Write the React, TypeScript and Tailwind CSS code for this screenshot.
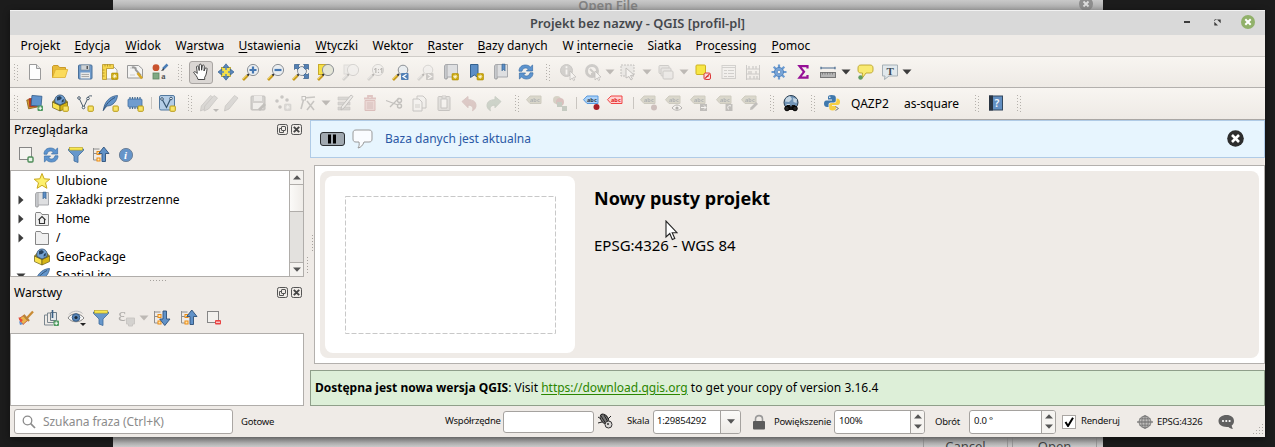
import React from "react";

type P = { children?: React.ReactNode; dim?: boolean };
const Ic = ({ children, dim }: P) => (
  <svg viewBox="0 0 18 18" className={dim ? "h-[18px] w-[18px] shrink-0 overflow-visible opacity-30 grayscale" : "h-[18px] w-[18px] shrink-0 overflow-visible"} fill="none">
    {children}
  </svg>
);

const Handle = ({ w }: { w: string }) => (
  <div className={`${w} flex shrink-0 justify-center`}>
    <svg viewBox="0 0 5 17" className="h-[17px] w-[5px]">
      {[0, 3, 6, 9, 12, 15].map((y) => (
        <g key={y} fill="#b5b1ac">
          <rect x="0" y={y} width="1" height="1" />
          <rect x="3" y={y + 1} width="1" height="1" />
        </g>
      ))}
    </svg>
  </div>
);
const Slot = ({ w = "w-[25px]", children }: { w?: string; children?: React.ReactNode }) => (
  <div className={`${w} flex shrink-0 items-center justify-center`}>{children}</div>
);
const Sep = ({ w = "w-[6px]" }: { w?: string }) => (
  <div className={`${w} flex shrink-0 justify-center`}>
    <div className="h-3 w-px bg-[#c9c5c0]" />
  </div>
);
const Arrow = ({ w, dim }: { w: string; dim?: boolean }) => (
  <div className={`${w} flex shrink-0 justify-center`}>
    <svg viewBox="0 0 10 6" className="h-[6px] w-[10px] shrink-0">
      <path d="M0.5 0.5h9L5 5.5z" fill={dim ? "#bdb9b5" : "#3c3c3c"} />
    </svg>
  </div>
);

const Star = ({ x = 12, y = 12 }: { x?: number; y?: number }) => (
  <g transform={`translate(${x} ${y})`}>
    <rect width="6.5" height="6.5" rx="0.8" fill="#c9a50a" stroke="#b08f00" strokeWidth=".6" />
    <path d="M3.2 1v4.4M1 3.2h4.4M1.7 1.7l3 3M4.7 1.7l-3 3" stroke="#fffbe0" strokeWidth=".8" />
  </g>
);
const Yellow = () => <rect x="12" y="12" width="5.3" height="5.3" rx="0.8" fill="#f8e468" stroke="#b89a14" strokeWidth="1" />;
const Lens = ({ cx = 11, cy = 7, r = 5.6, fill = "#e9edf0" }: { cx?: number; cy?: number; r?: number; fill?: string }) => (
  <g>
    <path d="M7 11 5 13" stroke="#333" strokeWidth="2" />
    <path d="M5.5 12.5 1 17" stroke="#c79a1e" strokeWidth="2.6" />
    <path d="M5 12.2 1 16" stroke="#f5d65b" strokeWidth="1" />
    <circle cx={cx} cy={cy} r={r} fill={fill} stroke="#8d9196" strokeWidth="1" />
  </g>
);
const Refresh = () => (
  <g>
    <path d="M2 8.2C2 4 5 2 8.5 2c2.3 0 3.8.9 4.9 2L15.6 2v6H9.4l2-2C10.600 5.200 9.700 5 8.500 5 6.500 5 5.500 6.200 5 8.200z" fill="#5d94cf" stroke="#3b6ea6" strokeWidth=".7" />
    <path d="M16 9.800C16 14 13 16 9.500 16c-2.300 0-3.800-.9-4.900-2L2.400 16v-6h6.200l-2 2c.8.8 1.700 1 2.900 1 2 0 3-1.200 3.500-3.200z" fill="#5d94cf" stroke="#3b6ea6" strokeWidth=".7" />
  </g>
);
const Bookmark = ({ mark = true }: { mark?: boolean }) => (
  <g>
    <path d="M2.500 4c0-1.500.8-2.500 2-2.500H15.500v12.500H5v2H3.500c-.6 0-1-.5-1-1z" fill="#dedfe1" stroke="#a0a3a7" strokeWidth=".9" />
    <path d="M5.200 1.500v14H3.500c-.6 0-1-.5-1-1V4c0-1.500.8-2.500 2-2.500z" fill="#c6c8cc" stroke="#999" strokeWidth=".5" />
    {mark && <path d="M10 1.200h3v6.600l-1.500-1.500L10 7.800z" fill="#5c8ec6" stroke="#33618f" strokeWidth=".7" />}
  </g>
);
const Cube = () => (
  <g>
    <path d="M1.500 8 9 11.500V17L1.500 13.600z" fill="#fae24c" stroke="#695b12" strokeWidth=".7" />
    <path d="M16.500 8 9 11.500V17l7.500-3.400z" fill="#d6b516" stroke="#695b12" strokeWidth=".7" />
    <path d="M1.500 8 4 5l5 2 5-2 2.500 3L9 11.500z" fill="#9c8520" stroke="#695b12" strokeWidth=".5" />
    <path d="M4 8.500C3 3.500 6 1 9 1s6 2.500 5 7.500l-5 2.500z" fill="#74a2d3" stroke="#34516f" strokeWidth=".8" />
    <path d="M6 3l3-1 2 2-2 2-3 .5zM11 6l2-1-.5 3-2 .5z" fill="#27425f" />
  </g>
);
const Feather = () => (
  <g>
    <path d="M2.500 16C3 9 8 2 16.500 1.500 16 7 12 12 6 12z" fill="#6395cb" stroke="#3a5f8a" strokeWidth=".8" />
    <path d="M2 17C5 10 9 6 14 3.500" stroke="#2e4c6e" strokeWidth=".9" />
  </g>
);
const Nodes = () => (
  <g>
    <path d="M3 4 7.500 13.500 12 4" stroke="#4a5c6c" strokeWidth="1" />
    <path d="M12 4c0-2 2-2.500 4-2" stroke="#4a5c6c" />
    <circle cx="3" cy="4" r="1.300" fill="#fff" stroke="#4a5c6c" />
    <circle cx="7.500" cy="13.500" r="1.300" fill="#fff" stroke="#4a5c6c" />
    <circle cx="12" cy="4.500" r="1.300" fill="#fff" stroke="#4a5c6c" />
  </g>
);
const Pencil = () => <path d="M12.500 1.500 16 4 7 15l-4.500 2 .8-5z" fill="#a7a29b" stroke="#6d6860" strokeWidth=".8" />;
const Tag = ({ fill, stroke, x = 0, y = 0 }: { fill: string; stroke: string; x?: number; y?: number }) => (
  <g transform={`translate(${x} ${y})`}>
    <path d="M1.500 6.700 5 3h11v7.500H5z" fill={fill} stroke={stroke} strokeWidth="1" strokeLinejoin="round" />
    <text x="5" y="8.900" fontSize="5.600" fontWeight="700" fontFamily="Noto Sans" fill={stroke === "#f04545" ? "#e02020" : "#2f3c49"}>abc</text>
  </g>
);
const Funnel = () => (
  <g>
    <path d="M1.500 3h15v1.500L11 10v6.500l-4-1.500v-5L1.500 4.500z" fill="#6797cb" stroke="#3e6b9c" strokeWidth=".8" />
    <rect x="2.500" y="1.500" width="13" height="2.600" fill="#f7e850" stroke="#b49c1a" strokeWidth=".6" />
  </g>
);
const TreeArrow = ({ down }: { down?: boolean }) => (
  <g>
    <path d="M1.500 2v12h4M1.500 3h6M1.500 7.500h4" stroke="#8e8e8e" />
    <rect x="5" y="5.500" width="3" height="3" fill="#ffe6ad" stroke="#ee8c12" />
    <rect x="5" y="12" width="3" height="3" fill="#ffe6ad" stroke="#ee8c12" />
    <path d={down ? "M10 2h3.500v8H17l-5.200 6.500L6.700 10H10z" : "M10 15.500h3.500v-8H17L11.800 1 6.700 7.500H10z"} fill="#6192c8" stroke="#2c4f78" strokeWidth=".9" />
  </g>
);
const Plus = () => (
  <g>
    <rect x="11.500" y="11.500" width="5.500" height="5.500" rx="1" fill="#4e9a5f" />
    <path d="M14.200 12.500v3.600M12.500 14.200h3.600" stroke="#fff" />
  </g>
);
const Sel = () => (
  <g>
    <rect x="2" y="2" width="13" height="11" fill="#ddd9b2" stroke="#555" strokeDasharray="2 1" />
    <path d="M7 5l8 7-3.500.5 2 3.500-1.500 1-2-3.500L7 15z" fill="#fff" stroke="#555" />
  </g>
);
const Cursor = () => <path d="M11 8l6 6-2.500.4 1.300 2.600-1.300.6-1.300-2.600L11 17z" fill="#fff" stroke="#555" strokeWidth=".8" />;

const Toolbar1 = () => (
  <div className="flex h-[31px] shrink-0 items-center border-b border-[#b3b0ad] bg-gradient-to-b from-[#f8f5f1] to-[#eeeae5]">
    <Handle w="w-[12px]" />
    <Slot><Ic><path d="M3.500 1.500h7l4 4v11h-11z" fill="#fdfdfd" stroke="#9a9a9a" /><path d="M10.500 1.500v4h4" fill="#e3e3e3" stroke="#9a9a9a" /></Ic></Slot>
    <Slot><Ic><path d="M1.500 14.500v-11l1-1H7l1.500 2h6v3" fill="#e8bb38" stroke="#c9992a" /><path d="M1.500 14.500 4.500 6.500h12.200l-2.500 8z" fill="#fbdb5c" stroke="#dcae30" strokeWidth=".8" /></Ic></Slot>
    <Slot><Ic><rect x="2.500" y="2" width="13.500" height="14" rx="1" fill="#6f9bcb" stroke="#4a7099" /><rect x="5" y="2" width="8.500" height="5" fill="#cfd3d6" stroke="#7b8a98" strokeWidth=".6" /><rect x="10.500" y="3" width="1.500" height="3" fill="#555" /><rect x="4.500" y="9.500" width="9.500" height="6" fill="#e9e9e7" /><path d="M5.500 11.500h7.500M5.500 13.500h7.500" stroke="#999" strokeWidth=".8" /></Ic></Slot>
    <Slot><Ic><path d="M5 4h8l3 3v9H5z" fill="#f8f8f6" stroke="#999" strokeWidth=".8" /><path d="M1.500 1.500h11v4h-7v11h-4z" fill="#f6d64d" stroke="#b8962a" strokeWidth=".8" /><path d="M4 3.500v-2M6.500 3.500v-2M9 3.500v-2M3.500 7h-2M3.500 10h-2M3.500 13h-2" stroke="#8d7010" strokeWidth=".6" /><Star x={10.500} y={10} /></Ic></Slot>
    <Slot><Ic><path d="M1.500 2.500h11l4 3.500v9h-15z" fill="#f4f4f3" stroke="#999" /><path d="M4 5h7M4 12h5" stroke="#ccc" /><path d="M6 4.500c2-.8 4 .5 3.800 2.500l5.200 5.600" stroke="#999" strokeWidth="2" /><path d="m11.500 10 4.500 5.500" stroke="#d5a625" strokeWidth="2.600" /></Ic></Slot>
    <Slot><Ic><circle cx="5" cy="4.700" r="3.400" fill="#c9522d" /><path d="M16.500 1.500 12 6" stroke="#4c7eb6" strokeWidth="2.500" /><path d="M12.500 5 10 8l3-.8z" fill="#32363b" /><rect x="2" y="10" width="6" height="6" fill="#7fa983" stroke="#5d8561" strokeWidth=".8" /><text x="10.200" y="15.800" fontSize="8.500" fontWeight="700" fontFamily="Liberation Serif" fill="#555">a</text></Ic></Slot>
    <Handle w="w-[17px]" />
    <div className="flex h-[23px] w-6 shrink-0 items-center justify-center rounded-[3px] border border-[#a9a5a2] bg-[#dad6d3]">
      <Ic><path d="M6 16.500C5.500 13.500 2.500 11 1.600 9.300c.8-1 2.200-.5 3.700 1.200L4.500 3.600c.9-.9 1.900-.5 2.100.6l.6 3.300V1.800c.8-1 2-.8 2.200.2l.2 5.200.8-4.800c.9-.7 1.900-.3 1.900.8L12 8l1.300-3c1-.5 1.900.1 1.700 1.200-.5 4-1 6.500-2.300 8v2.300z" fill="#fff" stroke="#333" strokeWidth=".9" /></Ic>
    </div>
    <Slot><Ic><rect x="4.500" y="4.500" width="9" height="9" fill="#f3df48" stroke="#b59d20" strokeWidth=".8" /><path d="M9 .8 12 4.500H6zM9 17.200 12 13.500H6zM1 9 4.700 6v6zM17 9l-3.700-3v6z" fill="#5887bd" stroke="#38618f" strokeWidth=".7" /><path d="M9 4v3M9 11v3M4 9h3M11 9h3" stroke="#5887bd" strokeWidth="1.500" /></Ic></Slot>
    <Slot><Ic><Lens /><path d="M11 3.500v7M7.500 7h7" stroke="#4678b2" strokeWidth="2.200" /></Ic></Slot>
    <Slot><Ic><Lens /><path d="M7.500 7h7" stroke="#4678b2" strokeWidth="2.200" /></Ic></Slot>
    <Slot><Ic><Lens r={4.500} cx={10} cy={8} /><path d="M2.500 1.500h5L6 3l1.500 1.500-2 2L4 5 2.500 6.500zM16.500 1.500h-5L13 3l-1.500 1.500 2 2L15 5l1.500 1.500zM16.500 15.500h-5L13 14l-1.500-1.500 2-2L15 12l1.500-1.500z" fill="#5480b4" stroke="#305a88" strokeWidth=".7" /></Ic></Slot>
    <Slot><Ic><rect x="1.500" y="1.500" width="8" height="10" fill="#f5e045" stroke="#c7a92c" /><Lens fill="#e4e5d6" /></Ic></Slot>
    <Slot><Ic dim><rect x="2" y="2" width="8" height="9" fill="#ddd" stroke="#aaa" /><Lens /></Ic></Slot>
    <Slot><Ic dim><Lens /><text x="6.500" y="9.500" fontSize="7" fontWeight="700" fontFamily="Noto Sans" fill="#222">1:1</text></Ic></Slot>
    <Slot><Ic><Lens r={4.800} /><rect x="9" y="10" width="7.500" height="7" rx=".7" fill="#507fb5" /><path d="m14.500 11.200-3.500 2.300 3.500 2.300" stroke="#fff" strokeWidth="1.300" /></Ic></Slot>
    <Slot><Ic dim><Lens r={4.800} /><rect x="9" y="10" width="7.500" height="7" rx=".7" fill="#777" /><path d="m11 11.200 3.500 2.300-3.500 2.300" stroke="#fff" strokeWidth="1.300" /></Ic></Slot>
    <Slot><Ic><Bookmark mark={false} /><Star x={10} y={10.500} /></Ic></Slot>
    <Slot><Ic><path d="M3.500 1.500h7.500v13l-3.700-2.500-3.800 2.500z" fill="#5c8ec6" stroke="#33618f" /><Star x={10} y={10.500} /></Ic></Slot>
    <Slot><Ic><Bookmark /></Ic></Slot>
    <Slot><Ic><Refresh /></Ic></Slot>
    <Handle w="w-[17px] pl-[3px]" />
    <Slot><Ic dim><circle cx="7.500" cy="7.500" r="6" fill="#888" stroke="#666" /><path d="M7.500 6.500v5M7.500 3.300v2" stroke="#fff" strokeWidth="1.800" /><Cursor /></Ic></Slot>
    <Slot><Ic dim><circle cx="8" cy="8" r="5.500" stroke="#777" strokeWidth="3" /><path d="M6 6l5 5M11 11H7" stroke="#777" strokeWidth="2" /><Cursor /></Ic></Slot>
    <Arrow w="w-[10px]" dim />
    <Slot w="w-[26px]"><Ic dim><Sel /></Ic></Slot>
    <Arrow w="w-[12px]" dim />
    <Slot w="w-[26px]"><Ic dim><rect x="2" y="2.500" width="10" height="8" rx="1" fill="#ccc" stroke="#777" /><rect x="4" y="5" width="10" height="8" rx="1" fill="#ccc" stroke="#777" /><rect x="6" y="8" width="10" height="8" rx="1" fill="#ddd" stroke="#777" /></Ic></Slot>
    <Arrow w="w-[9px]" dim />
    <Slot w="w-[30px]"><Ic><rect x="2" y="2" width="9.500" height="9.500" rx="1" fill="#f7e645" stroke="#cdb221" /><rect x="10" y="10" width="6.500" height="6.500" rx="1.500" fill="#f7dcdc" stroke="#dc3a3a" /><path d="m11 15.500 4.500-4.500M12 13.500h2.500" stroke="#dc3a3a" strokeWidth="1.100" /></Ic></Slot>
    <Slot w="w-[21px]"><Ic dim><rect x="2" y="2.500" width="13.500" height="13" fill="#f2f2f2" stroke="#888" /><path d="M2 4.500h13M4 7.500h3M8 7.500h6M4 10.500h3M8 10.500h6M4 13.500h3M8 13.500h6" stroke="#888" /></Ic></Slot>
    <Slot w="w-[27px]"><Ic dim><path d="M2.500 2v15M15.500 2v15M2 6h14M2 11h14M2 16h14" stroke="#777" /><path d="M5 3v3M9 3v3M12 3v3M5 8v3M7 8v3M12 8v3M6 13v3M10 13v3M13 13v3" stroke="#888" strokeWidth="1.500" /></Ic></Slot>
    <Slot><Ic><path d="M9 1.500v15M1.500 9h15M3.700 3.700l10.600 10.600M14.300 3.700 3.700 14.300" stroke="#6b9bd2" strokeWidth="2.200" /><circle cx="9" cy="9" r="4.600" fill="#77a4d8" stroke="#4c7db5" strokeWidth=".8" /><circle cx="9" cy="9" r="1.700" fill="#f6f3ee" stroke="#4c7db5" strokeWidth=".6" /></Ic></Slot>
    <Slot w="w-[24px]"><Ic><path d="M13.500 5.500V3.200H5.500l4.500 5.600-4.500 5.800h8v-2.600" stroke="#960f96" strokeWidth="2.200" /></Ic></Slot>
    <Slot><Ic><path d="M1.500 5h15M2 3.800v2.400M16 3.800v2.400" stroke="#47698d" strokeWidth="1.200" /><rect x="1.500" y="9.500" width="15" height="5" fill="#b5b5b5" stroke="#777" /><path d="M3.500 9.500v2M6 9.500v2M8.500 9.500v2M11 9.500v2M13.500 9.500v2" stroke="#666" strokeWidth=".7" /></Ic></Slot>
    <Arrow w="w-[11px]" />
    <Slot w="w-[28px]"><Ic><path d="M5 2h9c2 0 3 1 3 3v2c0 2-1 3-3 3h-4l-4 5.500 .5-5.500H5C3 10 2 9 2 7V5c0-2 1-3 3-3z" fill="#f9ea72" stroke="#bba52d" strokeWidth=".9" /><circle cx="4.500" cy="14.500" r="2.200" fill="#5e9c62" /></Ic></Slot>
    <Slot w="w-[21px]"><Ic><path d="M1.500 2h15v11H8l-4.500 3.500.5-3.500H1.500z" fill="#e1e8ec" stroke="#a5afb5" /><text x="5.500" y="11.800" fontSize="11" fontWeight="700" fontFamily="Liberation Serif" fill="#3c4a55">T</text></Ic></Slot>
    <Arrow w="w-[14px]" />
  </div>
);

const Disk = () => (
  <g><rect x="2" y="2" width="14" height="14" rx="1" fill="#888" stroke="#555" /><rect x="5" y="2" width="8" height="5" fill="#ddd" /><rect x="4" y="9" width="10" height="6" fill="#eee" /></g>
);
const LabelDim = ({ children }: P) => (
  <svg viewBox="0 0 18 18" className="h-[18px] w-[18px] shrink-0 overflow-visible opacity-35" fill="none">
    <Tag fill="#aaa88d" stroke="#87866f" x={-1} y={-1} />
    {children}
  </svg>
);

const Toolbar2 = () => (
  <div className="flex h-8 shrink-0 items-center border-b border-[#aaa7a4] bg-gradient-to-b from-[#f8f5f1] to-[#eeeae5] pb-px">
    <Handle w="w-[12px]" />
    <Slot><Ic><rect x="1.500" y="5" width="9" height="9" fill="#d89a2b" stroke="#8c641d" strokeWidth=".8" transform="rotate(-12 6 9)" /><rect x="3" y="4" width="9" height="9" fill="#b23b25" transform="rotate(-4 6 9)" /><rect x="5.500" y="1.800" width="10" height="10" fill="#5f92cc" stroke="#365e8b" strokeWidth=".8" transform="rotate(5 10 7)" /><Plus /></Ic></Slot>
    <Slot><Ic><Cube /><Yellow /></Ic></Slot>
    <Slot><Ic><Nodes /><Yellow /></Ic></Slot>
    <Slot><Ic><Feather /><Yellow /></Ic></Slot>
    <Slot><Ic><path d="M4 3v12M6.500 3v12M9 3v12M11.500 3v12M14 3v12" stroke="#41698f" strokeWidth="1.200" /><rect x="2" y="5" width="14" height="8" rx="1" fill="#6f9ccf" stroke="#436f9f" strokeWidth=".8" /><Yellow /></Ic></Slot>
    <Sep w="w-[9px]" />
    <Slot w="w-[21px]"><Ic><rect x="1.500" y="1.500" width="15" height="14.500" rx="1.500" fill="#b4cde6" stroke="#53799f" /><path d="m4 5 4.500 8.500L13 4" stroke="#35536f" strokeWidth="1.200" /><circle cx="4" cy="5" r="1.300" fill="#fff" stroke="#35536f" /><circle cx="13" cy="4.500" r="1.300" fill="#fff" stroke="#35536f" /><Yellow /></Ic></Slot>
    <Handle w="w-[24px] pl-[2px]" />
    <Slot w="w-[15px]"><Ic dim><g transform="translate(-2 0)"><Pencil /></g><g transform="translate(1.500 0)"><Pencil /></g><path d="M13 15h6l-3 3z" fill="#444" /></Ic></Slot>
    <Slot w="w-[30px]"><Ic dim><Pencil /></Ic></Slot>
    <Slot w="w-[24px]"><Ic dim><Disk /><path d="m9 15 6-6 2 2-6 6z" fill="#555" /></Ic></Slot>
    <Slot w="w-[26px]"><Ic dim><circle cx="3" cy="7" r="1.800" fill="#666" /><circle cx="8" cy="3" r="1.800" fill="#666" /><circle cx="13" cy="6" r="1.800" fill="#666" /><circle cx="6" cy="13" r="1.800" fill="#666" /><Star x={10.500} y={10} /></Ic></Slot>
    <Slot w="w-[24px]"><Ic dim><path d="M2 15 5 4l11-1M8 7l7 9M8 16l7-9" stroke="#666" strokeWidth="1.600" /><rect x="3" y="2.500" width="3.500" height="3.500" fill="#fff" stroke="#555" /></Ic></Slot>
    <Arrow w="w-[11px]" dim />
    <Slot w="w-[28px]"><Ic dim><path d="M2 3h12v3H2zM2 8h12v3H2zM2 13h12v3H2z" fill="#999" stroke="#666" strokeWidth=".6" /><path d="m15 1 2 1.500L8 14l-3 2 .500-3.500z" fill="#ddd" stroke="#555" /></Ic></Slot>
    <Slot w="w-[22px]"><svg viewBox="0 0 18 18" className="h-[18px] w-[18px] opacity-30" fill="none"><path d="M3 4.500h12M7 4V2h4v2" stroke="#b06060" strokeWidth="1.800" /><path d="M4 6.500h10v10H4z" fill="#d9a2a2" stroke="#a55" /><path d="M7 8v7M9 8v7M11 8v7" stroke="#955" /></svg></Slot>
    <Slot w="w-[26px]"><Ic dim><path d="M1 6.500 13 11M5 13 14 4" stroke="#555" strokeWidth="1.300" /><circle cx="14.500" cy="6.500" r="2" stroke="#555" strokeWidth="1.400" /><circle cx="14.500" cy="12" r="2" stroke="#555" strokeWidth="1.400" /></Ic></Slot>
    <Slot w="w-[24px]"><Ic dim><path d="M7 2h6l3 3v9H7z" fill="#eee" stroke="#666" /><path d="M3 5h6l3 3v9H3z" fill="#f6f6f6" stroke="#666" /><path d="M5 11h5M5 13h5" stroke="#888" /></Ic></Slot>
    <Slot><Ic dim><rect x="3" y="2.500" width="12" height="14" rx="1" fill="#bbb" stroke="#666" /><path d="M6 5h6v9H6zM7 2h4v2H7z" fill="#f8f8f8" stroke="#666" /></Ic></Slot>
    <Slot><svg viewBox="0 0 18 18" className="h-[18px] w-[18px] opacity-30" fill="none"><path d="M2 7.500 8 2.500v3.200c5 0 8 2 8 6 0 2-1.500 4-3.500 5 1-2.500.5-5.500-4.500-5.500v2.500z" fill="#a87070" stroke="#966" /></svg></Slot>
    <Slot><svg viewBox="0 0 18 18" className="h-[18px] w-[18px] opacity-30" fill="none"><path d="M16 7.500 10 2.500v3.200c-5 0-8 2-8 6 0 2 1.500 4 3.500 5-1-2.500-.5-5.500 4.500-5.500v2.500z" fill="#78917c" stroke="#687d6b" /></svg></Slot>
    <Handle w="w-[22px]" />
    <Slot w="w-[13px]"><LabelDim /></Slot>
    <Slot w="w-[33px] pl-[5px]"><svg viewBox="0 0 18 18" className="h-[18px] w-[18px] shrink-0 opacity-40" fill="none"><circle cx="6" cy="6" r="4" fill="#aaa38c" /><circle cx="9" cy="8" r="4" fill="#b27979" /><path d="M6 8h5v5H6zM11 12h5v5h-5z" fill="#859787" /></svg></Slot>
    <Sep w="w-[5px]" />
    <Slot w="w-[26px]"><Ic><Tag fill="#a9d2fa" stroke="#5899dd" x={-1} y={-1} /><circle cx="13.500" cy="13" r="3" fill="#a71e26" /></Ic></Slot>
    <Slot w="w-[22px]"><Ic><Tag fill="#ffd1d1" stroke="#f04545" x={-1} y={-1} /></Ic></Slot>
    <Sep w="w-[13px]" />
    <Slot w="w-[18px]"><LabelDim><circle cx="14" cy="13.500" r="3" fill="#8d6a6a" /></LabelDim></Slot>
    <Slot w="w-[32px]"><LabelDim><path d="M7 14c3-4 7-4 10 0-3 3-7 3-10 0z" fill="#fff" stroke="#444" /><circle cx="12" cy="14" r="1.600" fill="#444" /></LabelDim></Slot>
    <Slot w="w-[18px]"><LabelDim><path d="M10 10h7v7h-7z" fill="#666" /><path d="M11 13.500h5m-2-2 2 2-2 2" stroke="#fff" /></LabelDim></Slot>
    <Slot w="w-[33px]"><LabelDim><path d="M9.500 10h7v7h-7z" fill="#666" /><path d="M15 12c-3-1.500-4.500 2-2 3.500" stroke="#fff" /></LabelDim></Slot>
    <Slot w="w-[18px]"><LabelDim><path d="m9 16 .5-2.500L15 8l2 2-5.500 5.500z" fill="#666" /></LabelDim></Slot>
    <Handle w="w-[26px]" />
    <Slot w="w-[11px]"><Ic><circle cx="9" cy="8.500" r="7" fill="#7194b6" stroke="#2b3e50" /><path d="M4 4l4-2 2 3-3 3-4-.5zM11 4l4 1-.5 4-3-1zM4 10h4l-1 3z" fill="#c5d6e3" /><path d="m3 16 2-5h3l1 2 1-2h3l2 5" fill="#111" /><circle cx="5" cy="14.500" r="2.300" fill="#222" stroke="#000" /><circle cx="13" cy="14.500" r="2.300" fill="#222" stroke="#000" /></Ic></Slot>
    <Handle w="w-[34px]" />
    <Slot w="w-[3px]"><Ic><g transform="translate(-.5 -.5)"><path d="M9 1.500c-3 0-3.500 1-3.500 2.500v2h4v1H4C2 7 1.500 8.500 1.500 10.500S3 13.500 4.500 13.500H6v-2.300c0-1.500 1-2.200 2.300-2.200h3c1.200 0 2-.9 2-2V4c0-1.700-1.500-2.500-4.300-2.500z" fill="#3f78ad" /><path d="M10 17c3 0 3.500-1 3.500-2.500v-2h-4v-1H15c2 0 2.500-1.500 2.500-3.500S16 5 14.500 5H14v2c0 1.500-1 2.600-2.300 2.600h-3c-1.200 0-2 .9-2 2v2.700C6.700 16.200 7.500 17 10 17z" fill="#f7cf45" /><circle cx="7.300" cy="3.700" r=".8" fill="#fff" /><path d="m13 13 3 2-3 2" stroke="#777" /></g></Ic></Slot>
    <div className="w-[71px] shrink-0 whitespace-nowrap pl-[18px] pt-px text-[12px] leading-4">QAZP2</div>
    <div className="w-[56px] shrink-0 whitespace-nowrap pt-px text-[12px] leading-4">as-square</div>
    <Handle w="w-[35px]" />
    <Slot w="w-[2px]"><Ic><rect x="2.500" y="2" width="13" height="14" fill="#628fc2" stroke="#34495f" /><rect x="2" y="1.500" width="4" height="15" fill="#2a3543" /><text x="7.500" y="13" fontSize="10.500" fontWeight="600" fontFamily="Noto Sans" fill="#f0f5fb">?</text></Ic></Slot>
    <Handle w="w-[44px]" />
  </div>
);

const menu: [string, string, string, string][] = [
  ["Pro", "j", "ekt", "w-[54px]"],
  ["", "E", "dycja", "w-[51px]"],
  ["", "W", "idok", "w-[50px]"],
  ["W", "a", "rstwa", "w-[63px]"],
  ["", "U", "stawienia", "w-[77px]"],
  ["", "W", "tyczki", "w-[57px]"],
  ["Wekt", "o", "r", "w-[55px]"],
  ["", "R", "aster", "w-[50px]"],
  ["", "B", "azy danych", "w-[85px]"],
  ["W ", "i", "nternecie", "w-[85px]"],
  ["Siatka", "", "", "w-[48px]"],
  ["Pro", "c", "essing", "w-[76px]"],
  ["", "P", "omoc", "w-[60px]"],
];

const PanelTitle = ({ text }: { text: string }) => (
  <div className="flex h-[19px] items-center justify-between pl-1 pr-[2px] text-[12px]">
    <span className="whitespace-nowrap">{text}</span>
    <span className="flex gap-[3px]">
      <svg viewBox="0 0 11 11" className="h-[11px] w-[11px]" fill="none" stroke="#555"><rect x=".5" y=".5" width="10" height="10" rx="1.800" /><rect x="4.500" y="2.500" width="4" height="4" rx=".5" /><path d="M4 4.500H2.500v4h4V7" /></svg>
      <svg viewBox="0 0 11 11" className="h-[11px] w-[11px]" fill="none" stroke="#555"><rect x=".5" y=".5" width="10" height="10" rx="1.800" /><path d="m2.800 2.800 5.400 5.400M8.200 2.800 2.800 8.200" strokeWidth="1.900" stroke="#444" /></svg>
    </span>
  </div>
);

const TreeRow = ({ label, icon, state }: { label: string; icon: React.ReactNode; state?: "closed" | "open" }) => (
  <div className="flex h-[19px] items-center">
    <div className="flex w-[22px] justify-center pr-[3px]">
      {state === "closed" && <svg viewBox="0 0 6 10" className="h-[10px] w-[6px]"><path d="M.5.500 5.500 5l-5 4.500z" fill="#3c3c3c" /></svg>}
      {state === "open" && <svg viewBox="0 0 10 6" className="h-[6px] w-[10px]"><path d="M.5.500h9L5 5.500z" fill="#3c3c3c" /></svg>}
    </div>
    <div className="flex w-[23px] justify-start"><Ic>{icon}</Ic></div>
    <span className="whitespace-nowrap text-[12px] leading-[19px]">{label}</span>
  </div>
);
const folder = <path d="M2.500 15.500v-12l.5-1h4.500l1.500 2h6.500v11z" fill="#f0f0f0" stroke="#858585" />;

const ScrollBtn = ({ up }: { up?: boolean }) => (
  <div className="flex h-[13px] shrink-0 items-center justify-center bg-[#f4f2ef]">
    <svg viewBox="0 0 8 5" className="h-[5px] w-[8px]"><path d={up ? "M0 4.500 4 .3l4 4.200z" : "M0 .5 4 4.700 8 .5z"} fill="#555" /></svg>
  </div>
);

const LeftPanels = () => (
  <div className="flex w-[294px] shrink-0 flex-col">
    <PanelTitle text="Przeglądarka" />
    <div className="flex h-[31px] items-center pl-[3px]">
      <Slot><Ic><rect x="2.500" y="1.500" width="12" height="12" fill="#f5f4f1" stroke="#868686" /><rect x="11" y="11" width="5" height="5" rx="1" fill="#e9f5e9" stroke="#4e8c58" strokeWidth="1.400" /></Ic></Slot>
      <Slot><Ic><Refresh /></Ic></Slot>
      <Slot><Ic><Funnel /></Ic></Slot>
      <Slot><Ic><TreeArrow /></Ic></Slot>
      <Slot><Ic><circle cx="9" cy="9" r="6.600" fill="#6594c9" stroke="#6f8299" /><text x="7" y="13" fontSize="11" fontStyle="italic" fontWeight="700" fontFamily="Liberation Serif" fill="#fff">i</text></Ic></Slot>
    </div>
    <div className="flex h-[107px] overflow-hidden border border-[#b0adaa] bg-white">
      <div className="flex-1 overflow-hidden">
        <TreeRow label="Ulubione" icon={<path d="m9 1.500 2.200 5.300 5.600.4-4.300 3.600 1.400 5.500L9 13.300l-4.900 3 1.400-5.500L1.200 7.200l5.600-.4z" fill="#fdf06c" stroke="#c9a81c" />} />
        <TreeRow label="Zakładki przestrzenne" state="closed" icon={<Bookmark />} />
        <TreeRow label="Home" state="closed" icon={<>{folder}<path d="M5.500 10 9 6.500l3.500 3.500M6.500 9.500v4h5v-4" stroke="#333" strokeWidth="1.100" /></>} />
        <TreeRow label="/" state="closed" icon={folder} />
        <TreeRow label="GeoPackage" icon={<Cube />} />
        <TreeRow label="SpatiaLite" state="open" icon={<Feather />} />
      </div>
      <div className="flex w-[14px] flex-col border-l border-[#b0adaa] bg-[#e3e1de]">
        <ScrollBtn up />
        <div className="h-[28px] border-y border-[#b0adaa] bg-gradient-to-r from-[#fbfaf8] to-[#efece8]" />
        <div className="flex-1 border-b border-[#b0adaa]" />
        <ScrollBtn />
      </div>
    </div>
    <div className="flex h-[6px] items-center justify-center gap-[2px] pl-px">
      {[0, 1, 2, 3, 4, 5].map((i) => <span key={i} className="h-px w-px bg-[#a5a19d]" />)}
    </div>
    <PanelTitle text="Warstwy" />
    <div className="flex h-[31px] items-center pl-[3px]">
      <Slot><Ic><path d="M2 9.500 7.500 6l3 5.500-4.500 4z" fill="#e9b64c" stroke="#c84a33" strokeWidth=".8" /><path d="M1.500 8 6 11l-2.500 2.500z" fill="#e54a3c" /><path d="m2 12 4 3-3 1z" fill="#5b8fd0" /><path d="m10 9 6-6.500" stroke="#c98b35" strokeWidth="2.300" /><path d="m6.500 6 5.500 6" stroke="#b98339" strokeWidth="2.400" /></Ic></Slot>
      <Slot><Ic><path d="M5 6H2.500v10H11M8 4H5.500v9.500H13" stroke="#7a868f" /><path d="M8.500 3.500h6v8h-6z" fill="#e3e7ea" stroke="#6d7b87" /><path d="M10.500 1v8" stroke="#395f85" strokeWidth="1.600" /><Plus /></Ic></Slot>
      <Slot><Ic><path d="M1 9C4 3.500 13 3.500 17 9c-4 5-12 5-16 0z" fill="#f5f5f5" stroke="#777" strokeWidth=".9" /><path d="M2 5.500c3-4 10-4.500 13.500-1" stroke="#bbb" /><circle cx="9" cy="8.500" r="3.800" fill="#5885b8" stroke="#365d87" /><circle cx="9" cy="8.500" r="1.600" fill="#1c2b3a" /><path d="M13 14h6l-3 3z" fill="#222" /></Ic></Slot>
      <Slot><Ic><Funnel /></Ic></Slot>
      <Slot w="w-[27px]"><Ic dim><text x="0" y="12" fontSize="19" fontFamily="Liberation Serif" fill="#222">ε</text><path d="M8.500 9h8v6h-2v2h-4v-2h-2z" fill="#999" stroke="#777" /></Ic></Slot>
      <Arrow w="w-[8px]" dim />
      <Slot w="w-[28px]"><Ic><TreeArrow down /></Ic></Slot>
      <Slot><Ic><TreeArrow /></Ic></Slot>
      <Slot><Ic><rect x="2.500" y="2.500" width="11" height="11" fill="#f3f1ee" stroke="#868686" /><rect x="10" y="11" width="6" height="4.500" rx="1" fill="#e94444" /><path d="M11 13.200h4" stroke="#fff" /></Ic></Slot>
    </div>
    <div className="h-[73px] border border-[#b0adaa] bg-white" />
  </div>
);

const VDots = () => (
  <div className="flex flex-col gap-[2px]">
    {[0, 1, 2, 3, 4, 5].map((i) => <span key={i} className="h-px w-px bg-[#a5a19d]" />)}
  </div>
);

const Spin = ({ value, w }: { value: string; w: string }) => (
  <div className={`${w} flex h-6 shrink-0 overflow-hidden rounded-[3px] border border-[#a5a29f] bg-white`}>
    <div className="flex flex-1 items-center pl-1">{value}</div>
    <div className="flex w-[14px] flex-col items-center justify-center gap-[5px] border-l border-[#a5a29f] bg-[#f6f4f1]">
      <svg viewBox="0 0 8 5" className="h-[5px] w-[8px]"><path d="M0 4.500 4 .3l4 4.200z" fill="#555" /></svg>
      <svg viewBox="0 0 8 5" className="h-[5px] w-[8px]"><path d="M0 .5 4 4.700 8 .5z" fill="#555" /></svg>
    </div>
  </div>
);

const StatusBar = () => (
  <div className="flex h-[31px] shrink-0 items-center whitespace-nowrap pl-1 text-[9.5px] tracking-[-0.22px] text-[#111]">
    <div className="flex h-[25px] w-[219px] shrink-0 items-center rounded-[3px] border border-[#aaa6a3] bg-white text-[12px] tracking-[-0.08px] text-[#8b8b8b]">
      <svg viewBox="0 0 14 14" className="ml-[7px] mr-[7px] h-[14px] w-[14px]" fill="none" stroke="#8b8b8b" strokeWidth="1.300"><circle cx="5.500" cy="5.500" r="4.300" /><path d="m8.700 8.700 4.300 4.300" strokeWidth="1.700" /></svg>
      Szukana fraza (Ctrl+K)
    </div>
    <span className="ml-2 w-[204px] shrink-0 pt-px">Gotowe</span>
    <span className="w-[58px] shrink-0">Współrzędne</span>
    <div className="h-[22px] w-[91px] shrink-0 rounded-[3px] border border-[#a5a29f] bg-white" />
    <div className="flex w-[33px] shrink-0 pl-[3px]">
      <Ic><g transform="translate(0 -1)"><ellipse cx="7.500" cy="7" rx="3.500" ry="5.500" transform="rotate(-35 7.500 7)" fill="#777" stroke="#222" /><path d="m4 4 5 8M7 3l4 7M1 5l3 2M14 4l-3 3M1 11l4-1" stroke="#222" /><circle cx="11.500" cy="12.500" r="3.500" fill="#dbd9d7" stroke="#333" /><circle cx="11" cy="12" r="1" fill="#333" /></g></Ic>
    </div>
    <span className="w-[26px] shrink-0">Skala</span>
    <div className="flex h-6 w-[88px] shrink-0 overflow-hidden rounded-[3px] border border-[#a5a29f] bg-white">
      <span className="flex flex-1 items-center pl-[3px]">1:29854292</span>
      <span className="flex w-[20px] items-center justify-center border-l border-[#a5a29f] bg-gradient-to-b from-[#fbfaf8] to-[#edeae6]"><svg viewBox="0 0 8 5" className="h-[5px] w-[8px]"><path d="M0 .3 4 4.700 8 .3z" fill="#555" /></svg></span>
    </div>
    <div className="flex w-[33px] shrink-0 pl-[11px]">
      <svg viewBox="0 0 14 16" className="h-4 w-[14px]"><path d="M3.500 8V5c0-4.500 7-4.500 7 0v3" fill="none" stroke="#999" strokeWidth="1.600" /><rect x="1" y="7" width="12" height="8.500" rx="1" fill="#5c5c5c" /></svg>
    </div>
    <span className="w-[60px] shrink-0 pt-px">Powiększenie</span>
    <Spin value="100%" w="w-[91px]" />
    <span className="ml-[10px] w-[34px] shrink-0 pt-px">Obrót</span>
    <Spin value="0.0 °" w="w-[87px]" />
    <div className="ml-[6px] flex h-[14px] w-[14px] shrink-0 items-center justify-center border border-[#aaa6a3] bg-white">
      <svg viewBox="0 0 10 10" className="h-[10px] w-[10px]"><path d="M1.500 5 4 9 9 .8" fill="none" stroke="#000" strokeWidth="2" /></svg>
    </div>
    <span className="ml-[5px] w-[56px] shrink-0">Renderuj</span>
    <div className="flex w-[20px] shrink-0">
      <svg viewBox="0 0 16 16" className="h-4 w-4" fill="none" stroke="#777" strokeWidth=".9"><circle cx="8" cy="8" r="6" fill="#c0bebc" /><path d="M0 8h16" strokeWidth="1.300" /><path d="M2.500 4.800h11M2.500 11.200h11M8 1.500v13" /><ellipse cx="8" cy="8" rx="3.200" ry="6.300" /></svg>
    </div>
    <span className="w-[61px] shrink-0 pt-px">EPSG:4326</span>
    <svg viewBox="0 0 17 16" className="h-4 w-[17px] shrink-0"><path d="M8.500 1C13 1 16 3.500 16 7c0 2-1 3.500-2.300 4.500.1 1.500.8 2.500 1.300 3.200-2 0-3.600-.8-4.500-1.800-6 .6-10-2-10-5.900C.5 3.500 4 1 8.500 1z" fill="#616161" /><circle cx="5" cy="7" r="1.100" fill="#fff" /><circle cx="8.300" cy="7" r="1.100" fill="#fff" /><circle cx="11.600" cy="7" r="1.100" fill="#fff" /></svg>
    <svg viewBox="0 0 11 11" className="ml-auto mb-[2px] mr-px h-[11px] w-[11px] self-end" fill="#aca8a4">
      {[0, 1, 2, 3].map((r) => [0, 1, 2, 3].filter((c) => c + r >= 3).map((c) => <rect key={`${r}${c}`} x={c * 3} y={r * 3} width="1" height="1" />))}
    </svg>
  </div>
);

export default function App() {
  return (
    <div className="relative h-[447px] w-[1275px] overflow-hidden bg-[#1c1c1c] font-['Noto_Sans',sans-serif] text-black">
      <div className="absolute left-[113px] top-0 flex h-[447px] w-[990px] flex-col justify-between bg-[#c0c0c0]">
        <div className="relative flex h-[10px] justify-center bg-gradient-to-b from-[#c9c9c9] to-[#a8a8a8] text-[13px] font-semibold leading-[11px] text-[#828282]">
          Open File
          <svg viewBox="0 0 14 14" className="absolute -top-[3px] right-[10px] h-[14px] w-[14px]"><circle cx="7" cy="7" r="7" fill="#8e8e8e" /><path d="m4.500 4.500 5 5M9.500 4.500l-5 5" stroke="#ddd" strokeWidth="1.800" /></svg>
        </div>
        <div className="flex h-[10px] justify-end gap-1 overflow-hidden bg-gradient-to-b from-[#999] to-[#c9c9c9] pr-[6px] text-[13px] leading-[18px] text-[#444]">
          <div className="w-[85px] border-x border-[#999] text-center">Cancel</div>
          <div className="w-[85px] border-x border-[#999] text-center">Open</div>
        </div>
      </div>

      <div className="absolute left-[10px] top-[10px] flex h-[427px] w-[1255px] flex-col rounded-t-[2px] bg-[#efebe7] shadow-[0_2px_7px_rgba(0,0,0,0.45)]">
        <div className="relative flex h-[25px] shrink-0 items-center justify-center border-t border-[#f2f2f2] bg-[#d9d9d9] pt-[2px] text-[12.800px] font-semibold text-[#45484c]">
          <span className="whitespace-nowrap">Projekt bez nazwy - QGIS [profil-pl]</span>
          <div className="absolute right-[10px] top-[4px] flex items-center gap-[24px]">
            <span className="h-[2px] w-[6px] bg-[#3c3c3c]" />
            <svg viewBox="0 0 7 7" className="h-[7px] w-[7px]" fill="#3c3c3c"><path d="M3 .5h3.700v3.700zM.3 2.800v3.700H4zM2 0h1L0 2V1z" /></svg>
            <svg viewBox="0 0 14 14" className="-ml-[4px] h-[14px] w-[14px]"><circle cx="7" cy="7" r="7" fill="#91b16a" /><path d="m4.300 4.300 5.400 5.400M9.700 4.300 4.300 9.700" stroke="#fff" strokeWidth="2" /></svg>
          </div>
        </div>
        <div className="flex h-[22px] shrink-0 items-center border-b border-[#cfccc8] pl-[10.500px] text-[12px]">
          {menu.map(([a, u, b, w]) => (
            <span key={a + u + b} className={`${w} shrink-0 whitespace-pre leading-5`}>
              {a}<span className="underline underline-offset-2">{u}</span>{b}
            </span>
          ))}
        </div>
        <Toolbar1 />
        <Toolbar2 />
        <div className="flex h-[286px] shrink-0">
          <LeftPanels />
          <div className="flex w-[6px] shrink-0 items-center justify-center pt-[4px]"><VDots /></div>
          <div className="flex flex-1 flex-col">
            <div className="flex h-[38px] items-center border border-[#b0cbe6] bg-[#e7f5fe] pb-px pl-[9px] text-[12px] text-[#2a58a5]">
              <svg viewBox="0 0 25 14" className="h-[14px] w-[25px]"><rect x=".5" y=".5" width="24" height="13" rx="2.500" fill="#a0a8af" stroke="#2a2e31" /><path d="M8 2.500h3v9H8zM13 2.500h3v9h-3z" fill="#000" /></svg>
              <svg viewBox="0 0 21 20" className="ml-[7px] h-5 w-[21px]"><path d="M4 1h13c2 0 3 1 3 3v6c0 2-1 3-3 3h-5c-1 3-3 5.500-6 6 1-1.500 1.500-3.500 1-6H4c-2 0-3-1-3-3V4c0-2 1-3 3-3z" fill="#fafcff" stroke="#999" /></svg>
              <span className="ml-[12px] whitespace-nowrap">Baza danych jest aktualna</span>
              <svg viewBox="0 0 17 17" className="ml-auto mr-[20px] h-[17px] w-[17px]"><circle cx="8.500" cy="8.500" r="8.300" fill="#2d2d2d" /><path d="m5 5 7 7M12 5l-7 7" stroke="#fff" strokeWidth="2.600" /></svg>
            </div>
            <div className="mt-[7px] flex h-[199px]">
              <div className="flex w-1 shrink-0 items-center justify-center pb-[44px]"><VDots /></div>
              <div className="flex-1 border border-[#b3b0ad] bg-white p-[5px]">
                <div className="relative flex h-[187px] rounded-[8px] bg-[#efebe7] p-[5px]">
                  <div className="h-[177px] w-[250px] shrink-0 rounded-[8px] bg-white p-5">
                    <svg viewBox="0 0 211 138" className="h-[138px] w-[211px]"><rect x=".5" y=".5" width="210" height="137" fill="none" stroke="#c8c8c8" strokeDasharray="5 2" /></svg>
                  </div>
                  <div className="flex flex-col pl-[19px] pt-[9px]">
                    <span className="whitespace-nowrap text-[18px] font-bold leading-[26px]">Nowy pusty projekt</span>
                    <span className="mt-[24px] whitespace-nowrap text-[15px] leading-5">EPSG:4326 - WGS 84</span>
                  </div>
                  <svg viewBox="0 0 13 21" className="absolute left-[344.500px] top-[49px] h-[21px] w-[13px]"><path d="M1 1v16l3.800-3.500L7.300 19.500l2.500-1.100-2.600-5.700H12z" fill="#fff" stroke="#222" strokeWidth="1.100" /></svg>
                </div>
              </div>
            </div>
            <div className="mt-[6px] flex h-9 items-center whitespace-pre border border-[#8f9f8a] bg-[#ddefd8] pl-1 text-[12px]">
              <b>Dostępna jest nowa wersja QGIS</b>: Visit <a className="text-[#2b8600] underline underline-offset-2">https://download.qgis.org</a> to get your copy of version 3.16.4
            </div>
          </div>
        </div>
        <StatusBar />
      </div>
    </div>
  );
}
